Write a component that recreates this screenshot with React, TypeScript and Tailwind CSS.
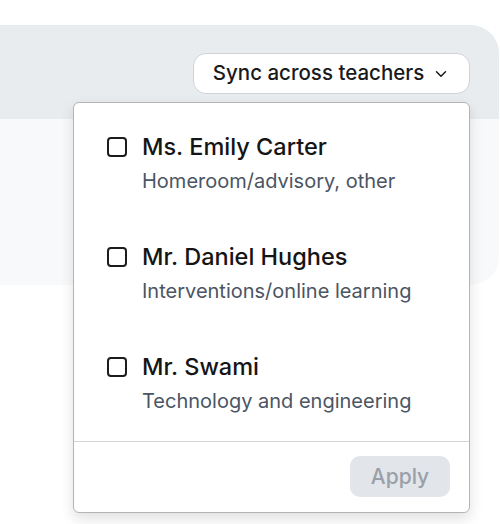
import React from "react";

const teachers = [
  { name: "Ms. Emily Carter", role: "Homeroom/advisory, other" },
  { name: "Mr. Daniel Hughes", role: "Interventions/online learning" },
  { name: "Mr. Swami", role: "Technology and engineering" },
];

export default function App() {
  return (
    <div
      className="relative w-[500px] h-[524px] bg-white overflow-hidden"
      style={{ fontFamily: "Inter, 'Noto Sans', sans-serif" }}
    >
      <div className="mt-[25px] w-[499px] rounded-r-[28px] overflow-hidden">
        <div className="h-[94px] bg-[#e9ecef] flex justify-end items-start pt-[28px] pr-[29px]">
          <button className="h-[41px] w-[277px] rounded-[13px] border border-[#cfd3d8] bg-white flex items-center justify-center gap-[8px] text-[20.5px] font-medium text-[#1a1a1a]">
            <span>Sync across teachers</span>
            <svg width="18" height="18" viewBox="0 0 24 24" fill="none" stroke="#1a1a1a" strokeWidth="2" strokeLinecap="round" strokeLinejoin="round">
              <path d="M6 9l6 6 6-6" />
            </svg>
          </button>
        </div>
        <div className="h-[166px] bg-[#f8f9fa]" />
      </div>

      <div className="absolute left-[73px] top-[102px] w-[397px] h-[411px] bg-white border border-[#b4b4b4] rounded-[6px] shadow-[0_6px_14px_rgba(0,0,0,0.12)] flex flex-col">
        <div className="flex flex-col gap-[50px] pt-[30px] pl-[33px] pb-[28px]">
          {teachers.map((t) => (
            <div key={t.name} className="flex flex-col">
              <div className="flex items-center gap-[15px] h-[28px]">
                <span className="w-[20px] h-[20px] rounded-[4px] border-2 border-[#1c1c1c] bg-white" />
                <span className="text-[23.5px] font-medium text-[#151515] leading-[28px]">{t.name}</span>
              </div>
              <div className="mt-[8px] pl-[35px] text-[20px] leading-[24px] text-[#4b5563]">{t.role}</div>
            </div>
          ))}
        </div>
        <div className="border-t border-[#d4d4d4] flex-1 flex justify-end items-start pt-[14px] pr-[19px]">
          <button className="w-[100px] h-[41px] rounded-[10px] bg-[#e2e5ea] text-[21px] font-medium text-[#9aa0a8]">
            Apply
          </button>
        </div>
      </div>
    </div>
  );
}
